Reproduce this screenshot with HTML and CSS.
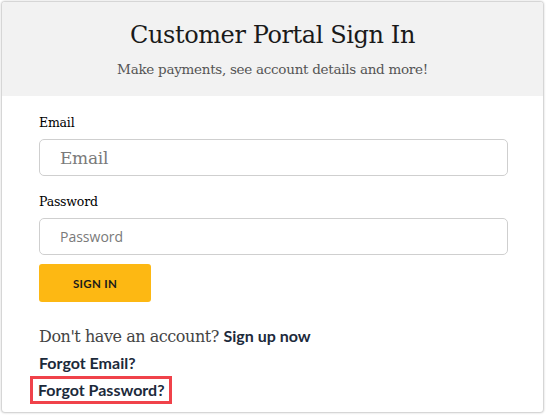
FILE: index.html
```html
<!DOCTYPE html>
<html lang="en">
<head>
<meta charset="utf-8">
<title>Customer Portal Sign In</title>
<link rel="stylesheet" href="styles.css">
</head>
<body>
<div class="card">
  <header class="card-head">
    <h1 class="title">Customer Portal Sign In</h1>
    <p class="subtitle">Make payments, see account details and more!</p>
  </header>
  <form class="card-body">
    <label class="label" for="email">Email</label>
    <input class="field field-email" id="email" type="text" placeholder="Email">
    <label class="label label-pw" for="pw">Password</label>
    <input class="field field-pw" id="pw" type="password" placeholder="Password">
    <button class="btn" type="button">SIGN IN</button>
    <p class="signup">Don't have an account? <a class="link" href="#">Sign up now</a></p>
    <a class="link block" href="#">Forgot Email?</a>
    <a class="link block highlighted" href="#">Forgot Password?</a>
  </form>
</div>
</body>
</html>
```

FILE: styles.css
```css
* { box-sizing: border-box; }
html, body { margin: 0; padding: 0; background: #ffffff; }
body { padding: 2px 4px 5px 2px; }

.card {
  width: 541px;
  height: 410px;
  background: #ffffff;
  border-radius: 3px;
  box-shadow: 0 0 2px 1px rgba(0,0,0,0.22);
  overflow: hidden;
}

.card-head {
  background: #f2f2f2;
  height: 94px;
  text-align: center;
  padding-top: 18px;
}

.title {
  margin: 0;
  font-family: "DejaVu Serif", serif;
  font-weight: normal;
  font-size: 24px;
  line-height: 30px;
  letter-spacing: -0.4px;
  color: #1a1a1a;
}

.subtitle {
  margin: 10px 0 0;
  font-family: "DejaVu Serif", serif;
  font-size: 13.5px;
  line-height: 18px;
  letter-spacing: -0.28px;
  color: #555555;
}

.card-body {
  display: flex;
  flex-direction: column;
  align-items: flex-start;
  padding: 19px 0 0 37px;
}

.label {
  font-family: "DejaVu Serif", serif;
  font-size: 12.5px;
  line-height: 16px;
  letter-spacing: -0.2px;
  color: #000000;
}

.label-pw { margin-top: 18px; }

.field {
  margin-top: 8px;
  width: 469px;
  height: 37px;
  border: 1px solid #cfcfcf;
  border-radius: 5px;
  padding: 0 0 0 20px;
  background: #fff;
  outline: none;
}
.field::placeholder { color: #7a7a7a; opacity: 1; }
.field-email {
  font-family: "DejaVu Serif", serif;
  font-size: 17px;
  letter-spacing: -0.3px;
}
.field-pw {
  font-family: "Open Sans", sans-serif;
  font-size: 14px;
}

.btn {
  margin-top: 9px;
  width: 112px;
  height: 38px;
  border: none;
  border-radius: 3px;
  background: #fdb813;
  color: #1a1a1a;
  font-family: "Lato", sans-serif;
  font-weight: 700;
  font-size: 11.5px;
  letter-spacing: 0.3px;
}

.signup {
  margin: 23px 0 0;
  font-family: "DejaVu Serif", serif;
  font-size: 16px;
  line-height: 21px;
  letter-spacing: -0.45px;
  color: #444444;
}

.link {
  font-family: "Lato", sans-serif;
  font-weight: 700;
  font-size: 16px;
  letter-spacing: 0;
  color: #1c2a3b;
  text-decoration: none;
}

.block {
  display: block;
  line-height: 21px;
  margin-top: 5px;
}

.highlighted {
  margin-top: 3px;
  margin-left: -9px;
  line-height: 22px;
  padding: 0 4px 0 5px;
  border: 3px solid #f0424a;
}
```
